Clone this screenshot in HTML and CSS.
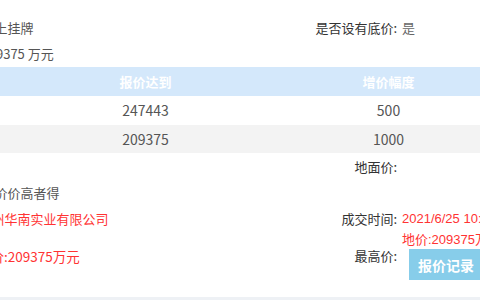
FILE: index.html
```html
<!DOCTYPE html>
<html lang="zh-CN">
<head>
  <meta charset="UTF-8">
  <title>地块成交信息</title>
  <link rel="stylesheet" href="styles.css">
</head>
<body>
  <div class="page">
    <div class="info-row">
      <div class="cell">交易方式: 网上挂牌</div>
      <div class="label">是否设有底价:</div>
      <div class="value">是</div>
    </div>
    <div class="info-row">
      <div class="cell">挂牌起价: 209375 万元</div>
      <div class="label"></div>
      <div class="value"></div>
    </div>

    <table class="bid-table">
      <thead>
        <tr><th class="col-no">轮次</th><th>报价达到</th><th>增价幅度</th></tr>
      </thead>
      <tbody>
        <tr><td>1</td><td>247443</td><td>500</td></tr>
        <tr class="even"><td>2</td><td>209375</td><td>1000</td></tr>
      </tbody>
    </table>

    <div class="info-row">
      <div class="cell"></div>
      <div class="label">地面价:</div>
      <div class="value"></div>
    </div>
    <div class="info-row">
      <div class="cell">竞得原则: 报价价高者得</div>
      <div class="label"></div>
      <div class="value"></div>
    </div>
    <div class="info-row">
      <div class="cell red">竞得单位:广州华南实业有限公司</div>
      <div class="label">成交时间:</div>
      <div class="value red">2021/6/25 10:25:36</div>
    </div>
    <div class="info-row tall">
      <div class="cell red total">竞得成交总价:209375万元</div>
      <div class="label">最高价:</div>
      <div class="value">
        <div class="red price-line">地价:209375万元</div>
        <button type="button" class="record-btn">报价记录</button>
      </div>
    </div>
  </div>
  <div class="strip"></div>
</body>
</html>
```

FILE: styles.css
```css
html, body {
  margin: 0;
  padding: 0;
  height: 300px;
  overflow: hidden;
  background: #fff;
}

body {
  font-family: "Noto Sans CJK SC", "Noto Sans", sans-serif;
  font-size: 13px;
  color: #555;
  display: flex;
  flex-direction: column;
}

.page {
  flex: 1;
  margin-left: -77px;
  width: 640px;
  padding-top: 14px;
}

.info-row {
  display: grid;
  grid-template-columns: 374px 100px 1fr;
  align-items: center;
  min-height: 26px;
  white-space: nowrap;
}

.label {
  text-align: right;
  color: #333;
}

.value {
  padding-left: 5px;
  color: #666;
}

.red {
  color: #f33;
}

.total {
  font-size: 13.5px;
}

.value.red, .price-line {
  font-family: "Liberation Sans", "Noto Sans CJK SC", sans-serif;
  font-size: 13px;
}

.price-line {
  line-height: 18px;
}

.record-btn {
  display: block;
  margin-left: 7px;
  height: 31px;
  padding: 0 9px;
  border: none;
  background: #87cdea;
  color: #fff;
  font-family: "Noto Sans CJK SC", sans-serif;
  font-size: 14px;
  font-weight: bold;
  cursor: pointer;
}

.bid-table {
  margin-top: 1px;
  width: 587px;
  border-collapse: collapse;
  table-layout: fixed;
}

.bid-table th {
  height: 29px;
  padding: 0;
  background: #d4e8fb;
  color: #fff;
  font-weight: bold;
  font-size: 13px;
  width: 243px;
}

.bid-table th.col-no {
  width: 101px;
}

.bid-table td {
  height: 28.5px;
  padding: 0;
  text-align: center;
  font-size: 14px;
  color: #555;
}

.bid-table tr.even td {
  background: #f3f3f3;
}

.strip {
  height: 3px;
  background: #eef1f5;
}
```
